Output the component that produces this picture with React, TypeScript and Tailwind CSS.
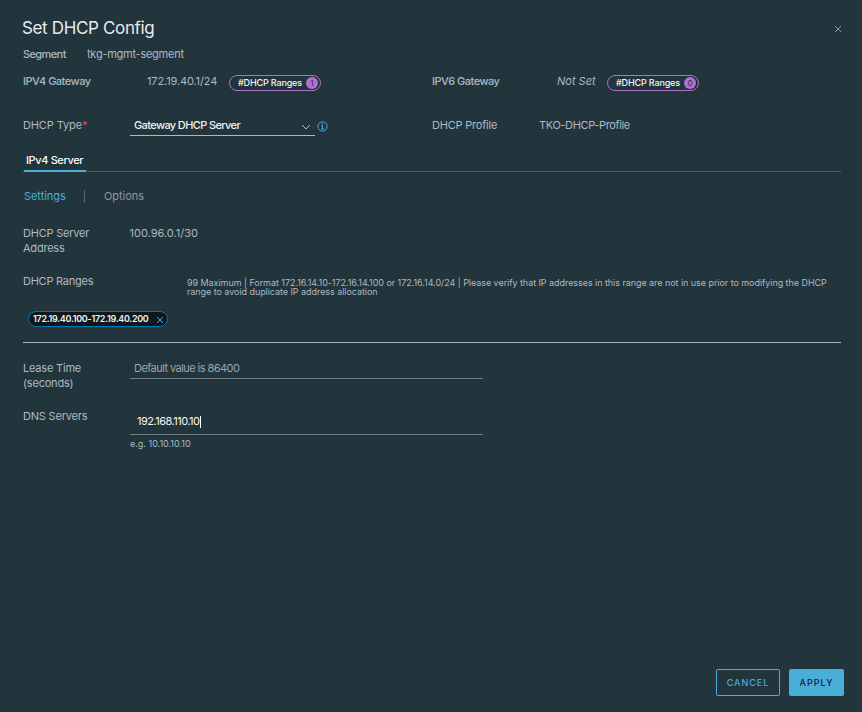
import React from "react";

function RangeBadge({ count }: { count: number }) {
  return (
    <span className="flex h-4 w-[92px] shrink-0 items-center justify-between rounded-full border border-[#ad73c8] pr-[2px] pl-2 text-[9px] leading-none font-medium text-[#f2f5f7]">
      <span className="-mt-[2px] tracking-[-0.15px] whitespace-nowrap">#DHCP Ranges</span>
      <span className="flex size-3 items-center justify-center rounded-full bg-[#b56fd0] text-[8px] font-normal text-[#22343c]">
        {count}
      </span>
    </span>
  );
}

function Cross({ className }: { className: string }) {
  return (
    <svg viewBox="0 0 8 8" className={className} fill="none" stroke="currentColor" strokeWidth="1">
      <path d="M1 1 7 7M7 1 1 7" />
    </svg>
  );
}

export default function App() {
  return (
    <div className="flex h-[712px] w-[862px] flex-col bg-[#22343c] pr-[21px] pl-[23px] font-['Inter','Liberation_Sans',sans-serif] text-[11px] leading-[15px] whitespace-nowrap text-[#acbac3]">
      <header className="mt-4 flex h-6 items-center justify-between">
        <h1 className="-ml-px text-[17px] leading-6 tracking-[-0.35px] text-[#e9ecef]">Set DHCP Config</h1>
        <Cross className="mt-[2px] -mr-[1px] size-2 text-[#8497a3]" />
      </header>

      <div className="mt-[6px] flex h-4 items-center">
        <span className="w-16 font-medium tracking-[-0.6px]">Segment</span>
        <span className="tracking-[-0.25px]">tkg-mgmt-segment</span>
      </div>

      <div className="mt-[11px] flex h-4 items-center">
        <span className="w-[124px] font-medium tracking-[-0.5px]">IPV4 Gateway</span>
        <span className="w-[82px] tracking-[-0.12px]">172.19.40.1/24</span>
        <div className="mt-[4px] w-[203px]">
          <RangeBadge count={1} />
        </div>
        <span className="w-[125px] font-medium tracking-[-0.5px]">IPV6 Gateway</span>
        <span className="w-[50px] italic">Not Set</span>
        <div className="mt-[4px]">
          <RangeBadge count={0} />
        </div>
      </div>

      <div className="mt-[27px] flex h-[20px] items-start">
        <span className="mt-[2px] w-[107px] tracking-[-0.12px]">
          DHCP Type<span className="text-[#e0503f]">*</span>
        </span>
        <div className="flex h-[20px] w-[185px] items-start justify-between border-b border-[#acbac3] pt-[2px] pr-1 pl-1 text-[#f0f3f5]">
          <span className="tracking-[-0.62px] font-medium">Gateway DHCP Server</span>
          <svg viewBox="0 0 10 6" className="mt-[6px] h-[6px] w-[10px] text-[#acbac3]" fill="none" stroke="currentColor">
            <path d="m1 1 4 4 4-4" />
          </svg>
        </div>
        <svg viewBox="0 0 12 12" className="mt-[4px] ml-[1px] size-3 text-[#49afd9]" fill="none" stroke="currentColor">
          <circle cx="6.5" cy="6.5" r="4.6" />
          <path d="M6.5 3.5v1.2M5 5.8h1.5V9M5 9h3" />
        </svg>
        <span className="mt-[2px] ml-[104px] w-[107px] tracking-[-0.2px]">DHCP Profile</span>
        <span className="mt-[2px] tracking-[-0.37px]">TKO-DHCP-Profile</span>
      </div>

      <div className="mt-[16px] flex h-5 shadow-[inset_0_-1px_0_#495a67]">
        <span className="ml-[1px] h-5 w-[62px] border-b-2 border-[#49afd9] pt-[1px] pl-[2px] font-medium tracking-[-0.38px] text-[#fafafa]">
          IPv4 Server
        </span>
      </div>

      <nav className="mt-[16px] flex h-4 items-center">
        <span className="ml-[1px] w-[60px] tracking-[-0.05px] text-[#49afd9]">Settings</span>
        <span className="h-[13px] w-5 border-l border-[#566872]" />
        <span className="tracking-[-0.05px] text-[#8b98a2]">Options</span>
      </nav>

      <div className="mt-[22px] flex h-[30px]">
        <span className="w-[106px] tracking-[-0.22px]">
          DHCP Server
          <br />
          Address
        </span>
        <span className="pl-[0.5px]">100.96.0.1/30</span>
      </div>

      <div className="mt-[18px] flex h-[25px]">
        <span className="w-[164px] tracking-[-0.25px]">DHCP Ranges</span>
        <p className="pt-1 text-[9px] leading-[9px] tracking-[-0.055px]">
          99 Maximum | Format 172.16.14.10-172.16.14.100 or 172.16.14.0/24 | Please verify that IP addresses in this range are not in use prior to modifying the DHCP
          <br />
          range to avoid duplicate IP address allocation
        </p>
      </div>
      <div className="mt-[12px] flex h-[32px] items-start border-b border-[#acbac3]">
        <span className="ml-[5px] flex h-4 w-[140px] items-center justify-between rounded-full border border-[#0077b8] bg-[#0f171c] pr-[3px] pl-1 text-[9px] leading-none font-semibold text-[#f0f3f5]">
          <span className="-mt-[2px] tracking-[-0.29px]">172.19.40.100-172.19.40.200</span>
          <Cross className="mt-px size-2 text-[#49afd9]" />
        </span>
      </div>

      <div className="mt-[18px] flex h-[30px] items-start">
        <span className="w-[107px] tracking-[-0.2px]">
          Lease Time
          <br />
          (seconds)
        </span>
        <span className="h-[18px] w-[353px] border-b border-[#71818a] pl-1 tracking-[-0.56px] text-[#9ba5ac]">Default value is 86400</span>
      </div>

      <div className="mt-[18px] flex h-[44px] items-start">
        <span className="w-[107px] tracking-[-0.2px]">DNS Servers</span>
        <div className="w-[353px]">
          <div className="flex h-[26px] items-start border-b border-[#71818a] pt-[5px] pl-[7px] text-[#f5f7f8]">
            <span className="tracking-[-0.5px]">192.168.110.10</span>
            <span className="mt-[2px] h-3 w-px bg-white" />
          </div>
          <div className="pt-[3px] text-[9px] leading-3">e.g. 10.10.10.10</div>
        </div>
      </div>

      <footer className="mt-auto mr-[-3px] mb-4 flex h-[27px] justify-end gap-[9px] text-[9px] font-medium tracking-[1px]">
        <button className="w-16 rounded-[2px] border border-[#49afd9] text-[#49afd9]">CANCEL</button>
        <button className="w-[55px] rounded-[2px] bg-[#49afd9] text-[#10202a]">APPLY</button>
      </footer>
    </div>
  );
}
